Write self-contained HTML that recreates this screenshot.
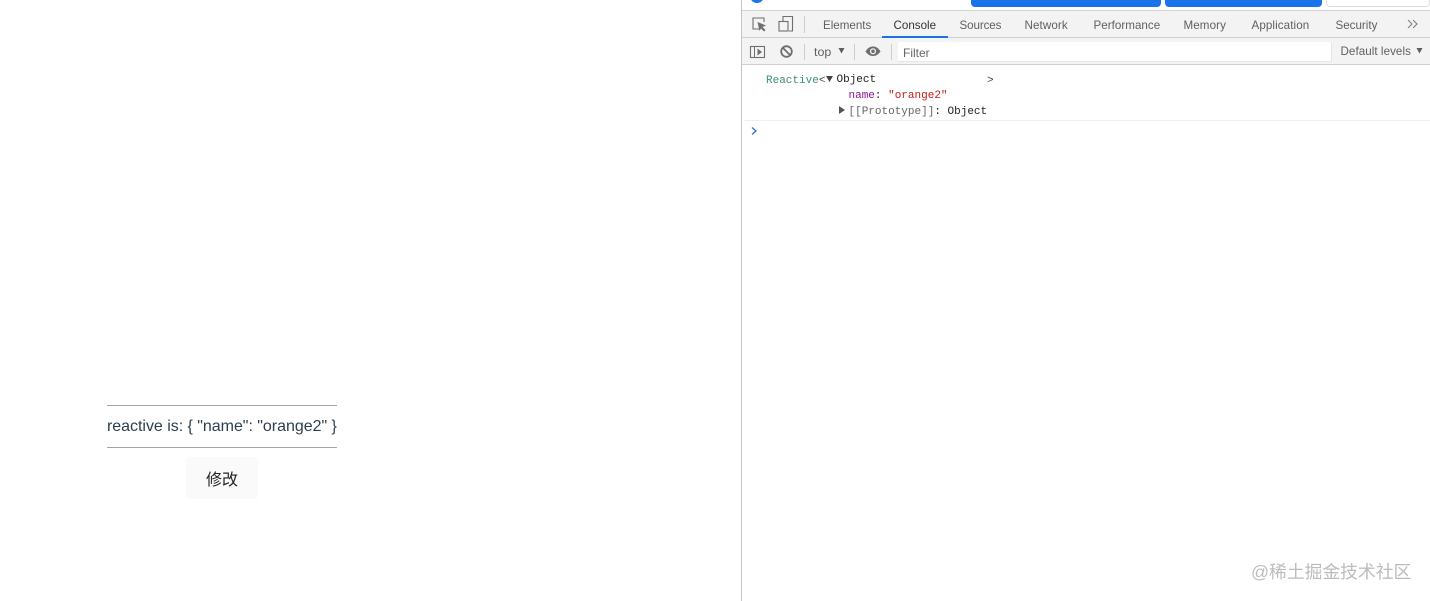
<!DOCTYPE html>
<html><head><meta charset="utf-8">
<style>
html,body{margin:0;padding:0;width:1430px;height:601px;overflow:hidden;background:#fff;font-family:"Liberation Sans","Noto Sans CJK SC",sans-serif}
.a{position:absolute;white-space:nowrap}
.tab{position:absolute;top:19px;font-size:11.6px;line-height:14px;color:#5f5f5f}
.m{font-family:"Liberation Mono",monospace;font-size:11px;line-height:13px;white-space:pre;position:absolute}
</style></head><body>
<div class="a" style="left:107px;top:405px;width:230px;height:41px;border-top:1px solid #a3a3a3;border-bottom:1px solid #a3a3a3;font-size:16px;letter-spacing:-.03px;line-height:42px;color:#2c3e50;overflow:visible">reactive is: { "name": "orange2" }</div>
<div class="a" style="left:186px;top:457px;width:72px;height:42px;background:#fafafa;border-radius:4px;font-size:16px;line-height:47px;text-align:center;color:#222">修改</div>

<div class="a" style="left:741px;top:0;width:1px;height:601px;background:#c4c4c4"></div>
<div class="a" style="left:750px;top:-11px;width:14px;height:14px;background:#1a73e8;border-radius:50%"></div>
<div class="a" style="left:971px;top:0;width:190px;height:7px;background:#1a73e8;border-radius:0 0 4px 4px"></div>
<div class="a" style="left:1165px;top:0;width:157px;height:7px;background:#1a73e8;border-radius:0 0 4px 4px"></div>
<div class="a" style="left:1326px;top:0;width:102px;height:6px;background:#fff;border:1px solid #ddd;border-top:0;border-radius:0 0 4px 4px"></div>

<div class="a" style="left:742px;top:10px;width:688px;height:28px;background:#f3f3f3;border-top:1px solid #d0d0d0;border-bottom:1px solid #d0d0d0;box-sizing:border-box"></div>
<div class="a" style="left:742px;top:38px;width:688px;height:27px;background:#f3f3f3;border-bottom:1px solid #d0d0d0;box-sizing:border-box"></div>

<svg class="a" style="left:742px;top:10px" width="80" height="56" viewBox="0 0 80 56" fill="none">
<path d="M18 19H11V8H22V12" stroke="#6e6e6e" stroke-width="1.1"/>
<path d="M15.500 12L24 15.500L20.500 17L23.500 20L22 21.500L19 18.500L17.500 21Z" fill="#6e6e6e"/>
<path d="M41 11V6.500H50.500V21H47" stroke="#6e6e6e" stroke-width="1.100"/>
<rect x="37" y="11.500" width="9" height="9.500" stroke="#6e6e6e" stroke-width="1.100"/>
<rect x="62" y="6" width="1" height="17" fill="#ccc"/>
<rect x="8.500" y="36.500" width="14" height="11" stroke="#6e6e6e" stroke-width="1.100"/>
<rect x="12" y="37" width="1" height="10" fill="#6e6e6e"/>
<path d="M15.500 38.500L20 42L15.500 45.500Z" fill="#6e6e6e"/>
<circle cx="44.500" cy="41.500" r="5.300" stroke="#6e6e6e" stroke-width="1.800"/>
<path d="M41 38L48 45" stroke="#6e6e6e" stroke-width="1.800"/>
<rect x="62" y="34" width="1" height="16" fill="#ccc"/>
</svg>

<div class="tab" style="left:823px">Elements</div>
<div class="tab" style="left:893.500px;color:#333">Console</div>
<div class="a" style="left:882px;top:36px;width:66px;height:2px;background:#1a73e8"></div>
<div class="tab" style="left:959.500px;letter-spacing:-.1px">Sources</div>
<div class="tab" style="left:1024.500px;letter-spacing:.1px">Network</div>
<div class="tab" style="left:1093.500px;letter-spacing:.03px">Performance</div>
<div class="tab" style="left:1183.500px;letter-spacing:.1px">Memory</div>
<div class="tab" style="left:1251.500px;letter-spacing:.1px">Application</div>
<div class="tab" style="left:1335.500px">Security</div>
<svg class="a" style="left:1406px;top:18px" width="14" height="12" viewBox="0 0 14 12" fill="none"><path d="M2 2L6 6L2 10M7 2L11 6L7 10" stroke="#7a7a7a" stroke-width="1"/></svg>

<div class="a" style="left:814px;top:45px;font-size:12.400px;line-height:14px;color:#5f5f5f">top</div>
<svg class="a" style="left:837px;top:47px" width="9" height="8"><path d="M1.500 1H7.500L4.500 6.500Z" fill="#5f5f5f"/></svg>
<div class="a" style="left:854px;top:44px;width:1px;height:16px;background:#ccc"></div>
<svg class="a" style="left:864px;top:44px" width="18" height="14" viewBox="0 0 18 14"><path d="M1.500 7.500C4 3.500 6.500 2.500 9 2.500S14 3.500 16.500 7.500C14 11 11.500 12 9 12S4 11 1.500 7.500Z" fill="#6e6e6e"/><circle cx="9" cy="7.300" r="3.100" fill="#f3f3f3"/><circle cx="9" cy="7.300" r="1.800" fill="#6e6e6e"/></svg>
<div class="a" style="left:891px;top:44px;width:1px;height:16px;background:#ccc"></div>
<div class="a" style="left:898px;top:42px;width:434px;height:20px;background:#fff;border:1px solid #e6e6e6;border-width:0 1px 1px 0;box-sizing:border-box;border-radius:2px 2px 0 0"></div>
<div class="a" style="left:903px;top:46px;font-size:12px;line-height:14px;color:#666">Filter</div>
<div class="a" style="left:1340.500px;top:45px;font-size:11.600px;letter-spacing:.06px;line-height:14px;color:#5f5f5f">Default levels</div>
<svg class="a" style="left:1415px;top:47px" width="9" height="8"><path d="M1.500 1H7.500L4.500 6.500Z" fill="#5f5f5f"/></svg>

<div class="m" style="left:766px;top:75px;color:#3d9172">Reactive<span style="color:#444">&lt;</span></div>
<svg class="a" style="left:825px;top:75px" width="9" height="8"><path d="M1 1H8L4.500 7Z" fill="#444"/></svg>
<div class="m" style="left:836.500px;top:74px;color:#222">Object</div>
<div class="m" style="left:987px;top:75px;color:#444">&gt;</div>
<div class="m" style="left:848.500px;top:90px;color:#222"><span style="color:#881391">name</span>: <span style="color:#c41a16">"orange2"</span></div>
<svg class="a" style="left:838px;top:105px" width="8" height="10"><path d="M1 1L7 5L1 9Z" fill="#555"/></svg>
<div class="m" style="left:848.500px;top:106px;color:#222"><span style="color:#666">[[Prototype]]</span>: Object</div>
<div class="a" style="left:744px;top:120px;width:686px;height:1px;background:#f0f0f0"></div>
<svg class="a" style="left:750px;top:126px" width="9" height="10" viewBox="0 0 9 10" fill="none"><path d="M2 1.500L6 5L2 8.500" stroke="#2a74d8" stroke-width="1.300"/></svg>

<div class="a" style="left:1251px;top:561px;font-size:17.800px;line-height:22px;color:#bcbcbc">@稀土掘金技术社区</div>
</body></html>
